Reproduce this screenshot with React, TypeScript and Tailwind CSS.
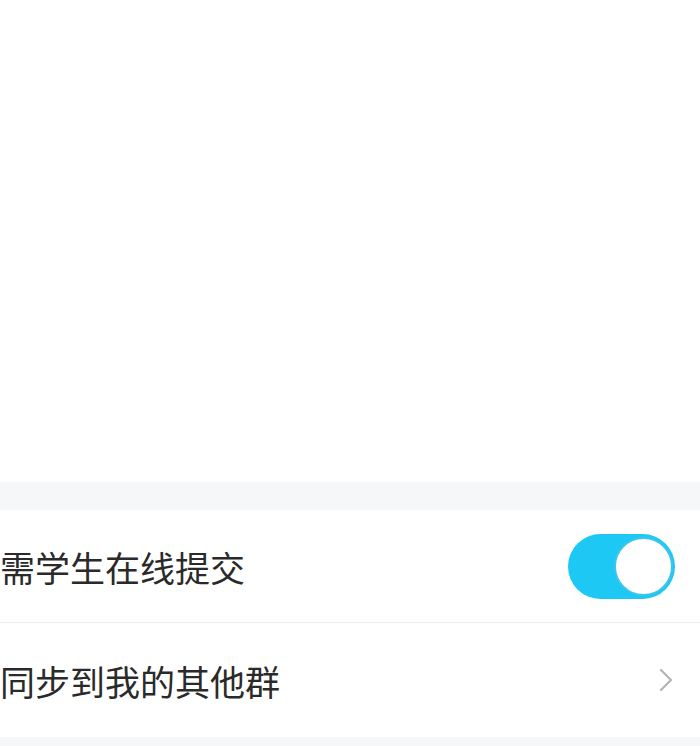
const Toggle = () => (
  <div className="relative h-[65px] w-[107px] rounded-full bg-[#1ec8f4]">
    <div className="absolute right-[2px] top-[3px] h-[59px] w-[59px] rounded-full border-2 border-[#3cc6ea] bg-white" />
  </div>
);

const Chevron = () => (
  <svg width="16" height="24" viewBox="0 0 16 24" fill="none">
    <path d="M3 2 L13 12 L3 22" stroke="#b4b4b4" strokeWidth="2.2" strokeLinecap="round" strokeLinejoin="round" />
  </svg>
);

const App = () => {
  return (
    <div
      className="flex h-[746px] w-[700px] flex-col bg-white text-[#2a2a2a]"
      style={{ fontFamily: '"Noto Sans CJK SC", "Noto Sans", sans-serif' }}
    >
      <div className="h-[482px] bg-white" />
      <div className="h-[28px] bg-[#f6f7f8]" />
      <div className="flex h-[113px] items-center justify-between border-b border-[#ececec] pr-[25px]">
        <span className="text-[35px] leading-none">需学生在线提交</span>
        <Toggle />
      </div>
      <div className="flex h-[114px] items-center justify-between pr-[26px]">
        <span className="text-[35px] leading-none">同步到我的其他群</span>
        <Chevron />
      </div>
      <div className="flex-1 bg-[#f6f7f8]" />
    </div>
  );
};

export default App;
